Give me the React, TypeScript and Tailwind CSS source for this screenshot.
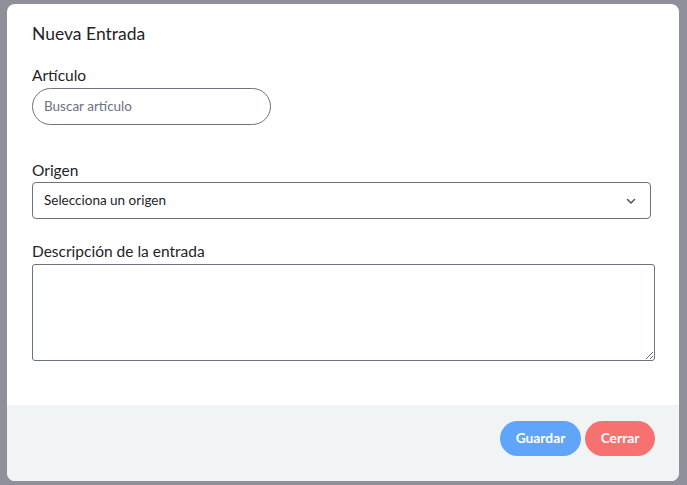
import React from "react";

export default function App() {
  return (
    <div
      className="w-[687px] h-[485px] overflow-hidden bg-[#8e919a] pt-[4px] pl-[7px]"
      style={{ fontFamily: "Lato, 'Noto Sans', sans-serif" }}
    >
      <div className="w-[672px] h-[477px] bg-white rounded-[8px] overflow-hidden flex flex-col">
        <div className="flex-1 px-[25px] pt-[19px] flex flex-col items-start">
          <h2 className="text-[17.5px] leading-[22px] text-[#1f2328]">Nueva Entrada</h2>

          <div className="mt-[21px] text-[15.5px] leading-[18px] text-[#1f2328]">Artículo</div>
          <div className="mt-[4px] w-[239px] h-[37px] rounded-full border border-[#6b7280] flex items-center px-[11px]">
            <span className="text-[13.5px] text-[#6b7280]">Buscar artículo</span>
          </div>

          <div className="mt-[36px] text-[15.5px] leading-[18px] text-[#1f2328]">Origen</div>
          <div className="mt-[3px] w-[619px] h-[37px] rounded-[4px] border border-[#6b7280] flex items-center justify-between pl-[11px] pr-[13px]">
            <span className="text-[13.5px] text-[#1f2328]">Selecciona un origen</span>
            <svg width="12" height="12" viewBox="0 0 12 12" fill="none">
              <path d="M2.5 4.5 L6 8 L9.5 4.5" stroke="#4b5563" strokeWidth="1.5" strokeLinecap="round" strokeLinejoin="round" />
            </svg>
          </div>

          <div className="mt-[23px] text-[15.5px] leading-[18px] text-[#1f2328]">Descripción de la entrada</div>
          <textarea className="mt-[4px] block w-[623px] h-[97px] rounded-[3px] border border-[#6b7280] resize-y outline-none" />
        </div>

        <div className="h-[76px] bg-[#f1f4f5] flex items-start justify-end gap-[4px] pr-[24px] pt-[16px]">
          <button className="h-[35px] w-[81px] rounded-full bg-[#60a5fa] text-white text-[13.8px] font-bold">
            Guardar
          </button>
          <button className="h-[35px] w-[70px] rounded-full bg-[#f87171] text-white text-[13.8px] font-bold">
            Cerrar
          </button>
        </div>
      </div>
    </div>
  );
}
